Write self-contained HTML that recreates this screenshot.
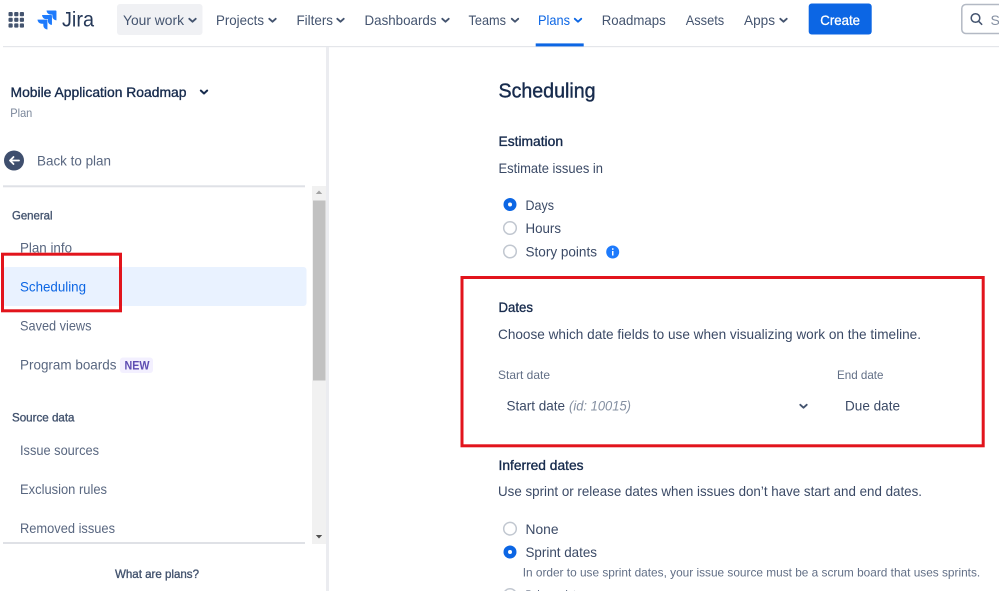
<!DOCTYPE html>
<html lang="en">
<head>
<meta charset="utf-8">
<title>Scheduling</title>
<style>
html,body{margin:0;padding:0;background:#fff;width:999px;height:591px;overflow:hidden}
svg{display:block}
text{font-family:"Liberation Sans",sans-serif;font-size:14px;fill:#44546f}
.n{fill:#44546f;font-size:14px}
.s{fill:#596780;font-size:14px}
.m{fill:#3b4a66;font-size:14px}
.h{fill:#172b4d;font-size:14px;stroke:#172b4d;stroke-width:.35}
.g{fill:#44546f;font-size:12px;stroke:#44546f;stroke-width:.35}
.l{fill:#626f86;font-size:12px}
.c{fill:none;stroke:#44546f;stroke-width:1.9;stroke-linecap:round;stroke-linejoin:round}
.r{fill:#fff;stroke:#c1c7d0;stroke-width:1.5}
</style>
</head>
<body>
<svg width="999" height="591" viewBox="0 0 999 591" xmlns="http://www.w3.org/2000/svg">
<!-- top nav -->
<rect x="3" y="46" width="996" height="1.2" fill="#e4e6ea"/>
<g fill="#44546f">
<rect x="8.5" y="12" width="4.2" height="4.2" rx="1"/><rect x="14.2" y="12" width="4.2" height="4.2" rx="1"/><rect x="19.8" y="12" width="4.2" height="4.2" rx="1"/>
<rect x="8.5" y="17.7" width="4.2" height="4.2" rx="1"/><rect x="14.2" y="17.7" width="4.2" height="4.2" rx="1"/><rect x="19.8" y="17.7" width="4.2" height="4.2" rx="1"/>
<rect x="8.5" y="23.4" width="4.2" height="4.2" rx="1"/><rect x="14.2" y="23.4" width="4.2" height="4.2" rx="1"/><rect x="19.8" y="23.4" width="4.2" height="4.2" rx="1"/>
</g>
<g transform="translate(37.5 10.5) scale(.79)"><path fill="#1d7afc" d="M11.571 11.513H0a5.218 5.218 0 0 0 5.232 5.215h2.13v2.057A5.215 5.215 0 0 0 12.575 24V12.518a1.005 1.005 0 0 0-1.005-1.005zm5.723-5.756H5.736a5.215 5.215 0 0 0 5.215 5.214h2.129v2.058a5.218 5.218 0 0 0 5.215 5.214V6.758a1.001 1.001 0 0 0-1.001-1.001zM23.013 0H11.455a5.215 5.215 0 0 0 5.215 5.215h2.129v2.057A5.215 5.215 0 0 0 24 12.483V1.005A1.001 1.001 0 0 0 23.013 0Z"/></g>
<text x="62" y="26.7" style="font-size:21px;fill:#253858" textLength="32" lengthAdjust="spacingAndGlyphs">Jira</text>
<rect x="117" y="4" width="85.5" height="31" rx="3" fill="#f0f1f4"/>
<text class="n" x="123" y="25" textLength="61" lengthAdjust="spacingAndGlyphs">Your work</text>
<path class="c" d="M189.300 18.800l3.200 2.900 3.200-2.900"/>
<text class="n" x="216" y="25" textLength="48" lengthAdjust="spacingAndGlyphs">Projects</text>
<path class="c" d="M269.300 18.800l3.200 2.900 3.200-2.900"/>
<text class="n" x="296.500" y="25" textLength="36.500" lengthAdjust="spacingAndGlyphs">Filters</text>
<path class="c" d="M337.300 18.800l3.200 2.900 3.200-2.900"/>
<text class="n" x="364.500" y="25" textLength="72" lengthAdjust="spacingAndGlyphs">Dashboards</text>
<path class="c" d="M442.300 18.800l3.200 2.900 3.200-2.900"/>
<text class="n" x="468.500" y="25" textLength="37.500" lengthAdjust="spacingAndGlyphs">Teams</text>
<path class="c" d="M511.800 18.800l3.200 2.900 3.200-2.900"/>
<text x="538" y="25" style="fill:#0c66e4" textLength="32" lengthAdjust="spacingAndGlyphs">Plans</text>
<path class="c" style="stroke:#0c66e4" d="M574.800 18.800l3.200 2.900 3.200-2.900"/>
<rect x="535.700" y="43.400" width="48" height="3" fill="#0c66e4"/>
<text class="n" x="601.700" y="25" textLength="64" lengthAdjust="spacingAndGlyphs">Roadmaps</text>
<text class="n" x="685.700" y="25" textLength="38.500" lengthAdjust="spacingAndGlyphs">Assets</text>
<text class="n" x="744" y="25" textLength="31" lengthAdjust="spacingAndGlyphs">Apps</text>
<path class="c" d="M780.300 18.800l3.200 2.900 3.200-2.900"/>
<rect x="808.700" y="3.500" width="63" height="31" rx="3" fill="#0c66e4"/>
<text x="820.300" y="25" style="fill:#fff;stroke:#fff;stroke-width:.3" textLength="39.700" lengthAdjust="spacingAndGlyphs">Create</text>
<rect x="961.800" y="4.500" width="60" height="29" rx="4" fill="#fff" stroke="#b3b9c4" stroke-width="1.500"/>
<circle cx="975.500" cy="18" r="4.300" fill="none" stroke="#44546f" stroke-width="1.500"/>
<path d="M978.700 21.300l3 3" stroke="#44546f" stroke-width="1.500" stroke-linecap="round"/>
<text x="990.500" y="25" style="fill:#8590a2">Search</text>

<!-- sidebar -->
<rect x="326" y="47" width="3" height="544" fill="#ebecf0"/>
<text x="10.500" y="97" style="fill:#172b4d;stroke:#172b4d;stroke-width:.35;font-size:14px" textLength="176" lengthAdjust="spacingAndGlyphs">Mobile Application Roadmap</text>
<path class="c" style="stroke:#172b4d;stroke-width:2" d="M200.800 90.500l3.200 3 3.200-3"/>
<text class="l" x="10.300" y="117" style="fill:#7a869a" textLength="22" lengthAdjust="spacingAndGlyphs">Plan</text>
<circle cx="14" cy="160.500" r="10" fill="#3f4f6e"/>
<path d="M19 160.500H10M13.500 157l-3.500 3.500 3.500 3.500" fill="none" stroke="#fff" stroke-width="1.800" stroke-linecap="round" stroke-linejoin="round"/>
<text class="s" x="37" y="165.500" textLength="74" lengthAdjust="spacingAndGlyphs">Back to plan</text>
<rect x="3" y="185.300" width="302" height="2" fill="#dfe1e6"/>
<rect x="312" y="186" width="14" height="358" fill="#f1f1f1"/>
<rect x="313" y="200.500" width="12.500" height="180" fill="#c1c1c1"/>
<path d="M319 190.500l3.200 3.500h-6.400z" fill="#a3a3a3"/>
<path d="M319 538.500l3.200-3.500h-6.400z" fill="#505050"/>
<text class="g" x="12" y="219.500" textLength="40.500" lengthAdjust="spacingAndGlyphs">General</text>
<text class="s" x="20" y="252.500" textLength="52" lengthAdjust="spacingAndGlyphs">Plan info</text>
<rect x="3" y="267" width="303.500" height="39" rx="3" fill="#e9f2ff"/>
<text x="20" y="291.500" style="fill:#0c66e4" textLength="66" lengthAdjust="spacingAndGlyphs">Scheduling</text>
<text class="s" x="20" y="330.500" textLength="71.500" lengthAdjust="spacingAndGlyphs">Saved views</text>
<text class="s" x="20" y="369.500" textLength="96.500" lengthAdjust="spacingAndGlyphs">Program boards</text>
<rect x="120" y="357.500" width="33" height="15.500" rx="3" fill="#f3f0ff"/>
<text x="124.500" y="369.500" style="fill:#5e4db2;font-size:11.500px;font-weight:bold" textLength="25" lengthAdjust="spacingAndGlyphs">NEW</text>
<text class="g" x="12" y="421.500" textLength="62.500" lengthAdjust="spacingAndGlyphs">Source data</text>
<text class="s" x="20" y="455" textLength="79" lengthAdjust="spacingAndGlyphs">Issue sources</text>
<text class="s" x="20" y="494" textLength="87" lengthAdjust="spacingAndGlyphs">Exclusion rules</text>
<text class="s" x="20" y="533" textLength="95" lengthAdjust="spacingAndGlyphs">Removed issues</text>
<rect x="3" y="542" width="302" height="2" fill="#dfe1e6"/>
<text x="115" y="578" style="fill:#44546f;stroke:#44546f;stroke-width:.35;font-size:12px" textLength="84" lengthAdjust="spacingAndGlyphs">What are plans?</text>
<rect x="2.500" y="254.200" width="118" height="56.600" fill="none" stroke="#e2141c" stroke-width="3"/>

<!-- main -->
<text x="498.500" y="97.500" style="fill:#172b4d;stroke:#172b4d;stroke-width:.4;font-size:20px" textLength="97" lengthAdjust="spacingAndGlyphs">Scheduling</text>
<text class="h" x="498.500" y="146" textLength="64.500" lengthAdjust="spacingAndGlyphs">Estimation</text>
<text class="m" x="498.500" y="173" textLength="104.500" lengthAdjust="spacingAndGlyphs">Estimate issues in</text>
<circle cx="510" cy="204.500" r="6.500" fill="#0c66e4"/><circle cx="510" cy="204.500" r="2" fill="#fff"/>
<text class="m" x="525.500" y="210" textLength="28.500" lengthAdjust="spacingAndGlyphs">Days</text>
<circle class="r" cx="510" cy="228" r="6.300"/>
<text class="m" x="525.500" y="233" textLength="35.500" lengthAdjust="spacingAndGlyphs">Hours</text>
<circle class="r" cx="510" cy="251.500" r="6.300"/>
<text class="m" x="525.500" y="256.500" textLength="71.500" lengthAdjust="spacingAndGlyphs">Story points</text>
<circle cx="612.700" cy="252" r="6.500" fill="#1d7afc"/>
<rect x="612" y="251" width="1.500" height="4.500" fill="#fff"/><rect x="612" y="248.300" width="1.500" height="1.500" fill="#fff"/>

<rect x="462" y="277.500" width="521.200" height="168.300" fill="none" stroke="#e2141c" stroke-width="3"/>
<text class="h" x="498.500" y="312" textLength="34.500" lengthAdjust="spacingAndGlyphs">Dates</text>
<text class="m" x="498" y="339" textLength="423" lengthAdjust="spacingAndGlyphs">Choose which date fields to use when visualizing work on the timeline.</text>
<text class="l" x="498" y="379" textLength="52" lengthAdjust="spacingAndGlyphs">Start date</text>
<text class="l" x="837" y="379" textLength="46.500" lengthAdjust="spacingAndGlyphs">End date</text>
<text class="m" x="506.500" y="410.500" textLength="58.500" lengthAdjust="spacingAndGlyphs">Start date</text>
<text x="569" y="410.500" style="fill:#8590a2;font-style:italic" textLength="62" lengthAdjust="spacingAndGlyphs">(id: 10015)</text>
<path class="c" d="M800.300 404.800l3.200 2.900 3.200-2.900"/>
<text class="m" x="845" y="410.500" textLength="55" lengthAdjust="spacingAndGlyphs">Due date</text>

<text class="h" x="498.500" y="470" textLength="85" lengthAdjust="spacingAndGlyphs">Inferred dates</text>
<text class="m" x="498" y="496" textLength="424" lengthAdjust="spacingAndGlyphs">Use sprint or release dates when issues don’t have start and end dates.</text>
<circle class="r" cx="510" cy="528.700" r="6.300"/>
<text class="m" x="525.500" y="534" textLength="33" lengthAdjust="spacingAndGlyphs">None</text>
<circle cx="510" cy="552" r="6.500" fill="#0c66e4"/><circle cx="510" cy="552" r="2" fill="#fff"/>
<text class="m" x="525.500" y="557" textLength="71.500" lengthAdjust="spacingAndGlyphs">Sprint dates</text>
<text class="l" x="522.700" y="576.500" textLength="457.500" lengthAdjust="spacingAndGlyphs">In order to use sprint dates, your issue source must be a scrum board that uses sprints.</text>
<circle class="r" cx="510" cy="595" r="6.300"/>
<text class="m" x="525.500" y="600" textLength="60" lengthAdjust="spacingAndGlyphs">Release dates</text>
</svg>
</body>
</html>
